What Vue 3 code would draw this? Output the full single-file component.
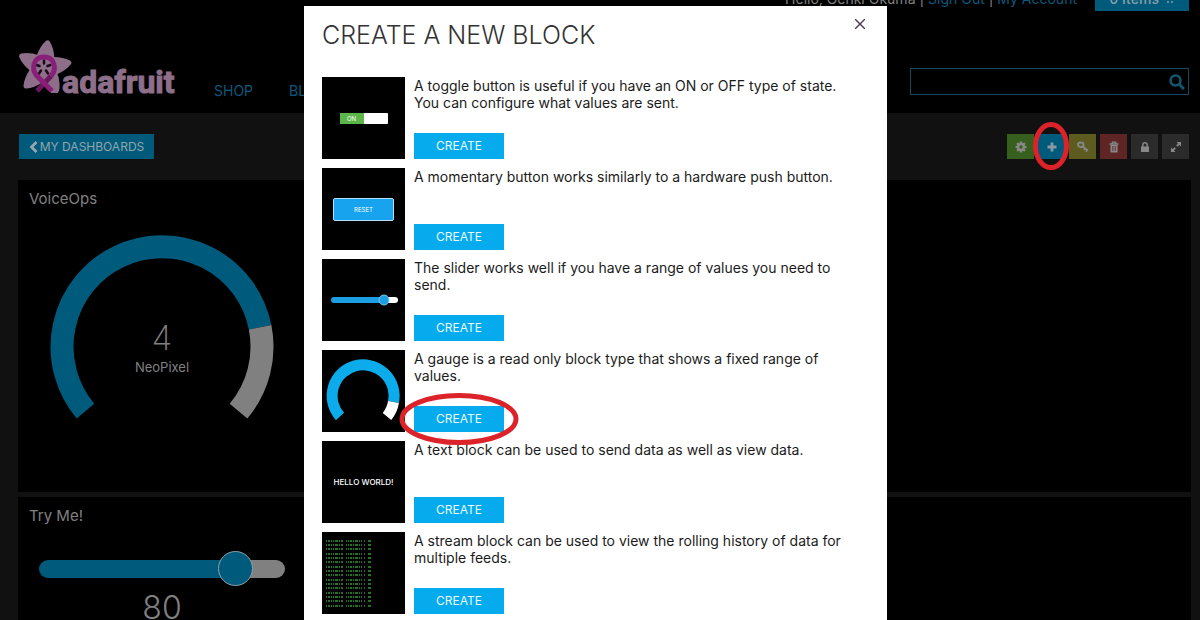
<script setup>
const blocks = [
  { kind: 'toggle', text: 'A toggle button is useful if you have an ON or OFF type of state. You can configure what values are sent.' },
  { kind: 'momentary', text: 'A momentary button works similarly to a hardware push button.' },
  { kind: 'slider', text: 'The slider works well if you have a range of values you need to send.' },
  { kind: 'gauge', text: 'A gauge is a read only block type that shows a fixed range of values.', marked: true },
  { kind: 'text', text: 'A text block can be used to send data as well as view data.' },
  { kind: 'stream', text: 'A stream block can be used to view the rolling history of data for multiple feeds.' },
]
const rows = Array.from({ length: 16 }, (_, i) => 9 + i * 4 + Math.floor(i / 3))
const petals = [8, 78, 150, 225, 298]
</script>

<template>
  <div class="page">
    <header class="top">
      <div class="account">
        <span>Hello, Genki Okuma | <a href="#">Sign Out</a> | <a href="#">My Account</a></span>
        <button class="cart">0 Items
          <svg width="12" height="12" viewBox="0 0 12 12" aria-hidden="true"><path d="M0 1h2l2 6h6l1-4H3" fill="none" stroke="currentColor" /><circle cx="5" cy="10" r="1" fill="currentColor" /><circle cx="9" cy="10" r="1" fill="currentColor" /></svg>
        </button>
      </div>
      <div class="nav-row">
        <a class="logo" href="#" aria-label="adafruit">
          <svg width="156" height="58" viewBox="0 0 156 58">
            <g fill="#8e6f89">
              <path v-for="a in petals" :key="a" :transform="`rotate(${a} 25 28)`" d="M25 30L16 17Q18 7 23 1q2-2 4 0Q32 7 34 17z" />
              <path d="M29 33h5q5 4 5 10v10h-7z" />
            </g>
            <g stroke="#170a16" stroke-width="2.500" stroke-linecap="round">
              <path d="M25 23.500v-3M28.500 26l3-1M27 30.500l2 3M22 30.500l-2 3M20.500 26l-3-1" />
            </g>
            <path d="M18 51L32 36" stroke="#6b175d" stroke-width="5" fill="none" />
            <path d="M32 36C38 29 36 17 25 17S12 29 18 36L33 51" fill="none" stroke="#8a1f79" stroke-width="5" />
            <text x="43" y="53" class="wordmark">adafruit</text>
          </svg>
        </a>
        <nav>
          <a href="#">SHOP</a>
          <a href="#">BLOG</a>
        </nav>
        <form class="search" @submit.prevent>
          <input type="search" aria-label="Search">
          <button aria-label="Search"><svg width="16" height="16" viewBox="0 0 16 16"><circle cx="6.500" cy="6.500" r="5" fill="none" stroke="#12566f" stroke-width="2.500" /><path d="M10 10l5 5" stroke="#12566f" stroke-width="3" /></svg></button>
        </form>
      </div>
    </header>

    <main>
      <div class="toolbar">
        <button class="back"><svg width="9" height="12" viewBox="0 0 9 12"><path d="M7.500 1L2.500 6l5 5" fill="none" stroke="#94a5ab" stroke-width="2.800" /></svg>MY DASHBOARDS</button>
        <div class="tools">
          <button class="tool green" aria-label="Settings"><svg viewBox="0 0 12 12"><circle cx="6" cy="6" r="3" fill="none" stroke="#888" stroke-width="2.400" /><path d="M6 .5v2M6 9.500v2M.5 6h2M9.500 6h2M2.100 2.100l1.400 1.400M8.500 8.500l1.400 1.400M9.900 2.100L8.500 3.500M3.500 8.500l-1.400 1.400" stroke="#888" stroke-width="2.200" /></svg></button>
          <button class="tool blue" aria-label="Add block"><svg viewBox="0 0 12 12"><path d="M6 1.500v9M1.500 6h9" stroke="#8a9aa0" stroke-width="2.800" /></svg>
            <svg class="ring plus-ring" viewBox="0 0 36 48" aria-hidden="true"><ellipse cx="18" cy="24" rx="15.500" ry="21.500" /></svg>
          </button>
          <button class="tool olive" aria-label="Keys"><svg viewBox="0 0 12 12"><path d="M5.500 5.500l5.500 4M8 7.500l-1 1.500M10 9l-1 1.800" stroke="#888" stroke-width="1.600" /><ellipse cx="3.800" cy="3.800" rx="2.800" ry="2.300" fill="none" stroke="#888" stroke-width="1.800" /></svg></button>
          <button class="tool red" aria-label="Delete"><svg viewBox="0 0 12 12"><path d="M1.500 3h9M4.300 3V1.200h3.400V3" fill="none" stroke="#888" stroke-width="1.300" /><path d="M2.500 4h7v7.500h-7z" fill="#888" /><path d="M4.500 5v5M6 5v5M7.500 5v5" stroke="#5f2424" stroke-width=".6" /></svg></button>
          <button class="tool gray" aria-label="Lock"><svg viewBox="0 0 12 12"><path d="M2 5.500h8V11H2z" fill="#888" /><path d="M3.800 6V4a2.200 2.200 0 014.400 0v2" fill="none" stroke="#888" stroke-width="1.500" /></svg></button>
          <button class="tool gray" aria-label="Full screen"><svg viewBox="0 0 12 12"><path d="M6.500 1H11v4.500zM1 6.500V11h4.500z" fill="#888" /><path d="M2.500 9.500l2.700-2.700M6.800 5.200l2.700-2.700" stroke="#888" stroke-width="1.800" /></svg></button>
        </div>
      </div>
      <section class="card gauge-card">
        <h2>VoiceOps</h2>
        <div class="card-body">
          <svg width="224" height="186" viewBox="0 0 224 186" fill="none" stroke-width="23">
            <path d="M35.500 176.100A100 100 0 1 1 210.100 92.200" stroke="#005a7b" />
            <path d="M210.100 92.200A100 100 0 0 1 188.500 176.100" stroke="#808080" />
          </svg>
          <div class="reading"><strong>4</strong><span>NeoPixel</span></div>
        </div>
      </section>
      <section class="card slider-card">
        <h2 id="try">Try Me!</h2>
        <div class="card-body">
          <input class="range" type="range" min="0" max="100" value="85" aria-labelledby="try">
          <output>80</output>
        </div>
      </section>
    </main>

    <div class="overlay">
      <section class="modal" role="dialog" aria-modal="true" aria-labelledby="modal-title">
        <button class="close" aria-label="Close"><svg width="10" height="10" viewBox="0 0 10 10"><path d="M0 0l10 10M10 0L0 10" stroke="#4b3b4b" stroke-width="1.400" /></svg></button>
        <h1 id="modal-title">CREATE A NEW BLOCK</h1>
        <ul>
          <li v-for="b in blocks" :key="b.kind">
            <div class="thumb">
              <div v-if="b.kind === 'toggle'" class="mini-toggle"><span>ON</span></div>
              <div v-else-if="b.kind === 'momentary'" class="mini-reset">RESET</div>
              <svg v-else-if="b.kind === 'slider'" width="83" height="82" viewBox="0 0 83 82"><path d="M64 41h9" stroke="#fff" stroke-width="6" stroke-linecap="round" /><path d="M12 41h47" stroke="#1b9ee2" stroke-width="6" stroke-linecap="round" /><circle cx="62" cy="41" r="5" fill="#1b9ee2" stroke="#7cc9f3" stroke-width="1" /></svg>
              <svg v-else-if="b.kind === 'gauge'" width="83" height="82" viewBox="0 0 83 82" fill="none" stroke-width="11"><path d="M18 66.500A31 31 0 1 1 71.500 52" stroke="#0cabeb" /><path d="M71.500 52A31 31 0 0 1 65 66.500" stroke="#fff" /></svg>
              <span v-else-if="b.kind === 'text'" class="hello">HELLO WORLD!</span>
              <svg v-else width="83" height="82" viewBox="0 0 83 82" fill="none" stroke="#2f8c32" stroke-width="2"><path v-for="y in rows" :key="y" :d="`M4 ${y}H49`" stroke-dasharray="1 1 2 1 1 1 1 1 3 1 1 1 2 3 1 1 1 1 2 1 1 1 3 1 1 1 1 2 1 3 4 20" opacity=".8" /></svg>
            </div>
            <div class="info">
              <p>{{ b.text }}</p>
              <div class="action">
                <button class="create">CREATE</button>
                <svg v-if="b.marked" class="ring create-ring" viewBox="0 0 120 52" aria-hidden="true"><ellipse cx="60" cy="26" rx="57" ry="23.500" /></svg>
              </div>
            </div>
          </li>
        </ul>
      </section>
    </div>
  </div>
</template>

<style>
body { background: #111; }
</style>

<style scoped>
* { box-sizing: border-box; }
.page { position: relative; display: flow-root; height: 100vh; overflow: hidden; background: #111; font-family: Inter, "Liberation Sans", sans-serif; color: #808080; }
button { border: 0; padding: 0; font: inherit; cursor: pointer; }
a { color: #0d587c; text-decoration: none; }
.top { display: flow-root; background: #000; height: 113px; padding: 0 11px 0 19px; }
.account { display: flex; justify-content: flex-end; align-items: center; gap: 18px; height: 26px; margin-top: -15px; font-size: 14px; }
.cart { width: 94px; height: 26px; background: #005a7b; color: #8aa0a8; font-weight: 500; }
.nav-row { display: flex; align-items: flex-start; margin-top: 29px; }
.logo { width: 156px; height: 58px; }
.wordmark { font: 700 32px Roboto, sans-serif; fill: #8e6f89; stroke: #8e6f89; stroke-width: 1; }
nav { display: flex; gap: 36px; margin: 42px 0 0 39px; font-size: 14px; line-height: 17px; }
.search { position: relative; width: 279px; height: 27px; margin: 28px 0 0 auto; }
.search input { width: 100%; height: 100%; border: 1px solid #164a5e; background: #000; color: #808080; padding: 0 30px 0 8px; }
.search button { position: absolute; right: 4px; top: 6px; width: 16px; height: 16px; background: none; }
.search button svg { display: block; }
main { padding: 21px 9px 0 18px; }
.toolbar { display: flex; justify-content: space-between; padding: 0 2px 0 1px; }
.back { display: flex; align-items: center; justify-content: center; gap: 2px; width: 135px; height: 25px; background: #005a7b; color: #94a5ab; font-size: 12px; }
.tools { display: flex; gap: 4px; }
.tool { position: relative; display: grid; place-items: center; width: 27px; height: 25px; }
.tool > svg:first-child { width: 12px; height: 12px; }
.green { background: #37601f; }
.blue { background: #005a7b; }
.olive { background: #5d5b1f; }
.red { background: #5f2424; }
.gray { background: #2b2b2b; }
.ring { position: absolute; fill: none; stroke: #db2329; stroke-width: 5; z-index: 2; pointer-events: none; }
.plus-ring { left: -5px; top: -12px; width: 36px; height: 48px; }
.card { background: #000; }
.card h2 { margin: 0; padding: 10px 11px 0; font-size: 15px; line-height: 18px; font-weight: 400; }
.card-body { width: 288px; position: relative; display: flex; flex-direction: column; align-items: center; }
.gauge-card { margin-top: 21px; height: 312px; }
.gauge-card svg { margin-top: 27px; }
.reading { position: absolute; top: 109px; display: flex; flex-direction: column; align-items: center; }
.reading strong { font-size: 34px; line-height: 42px; font-weight: 200; }
.reading span { font-size: 13px; line-height: 16px; }
.slider-card { margin-top: 5px; height: 124px; }
.range { appearance: none; width: 246px; height: 36px; margin: 26px 0 0; background: none; }
.range::-webkit-slider-runnable-track { height: 18px; border-radius: 9px; background: linear-gradient(to right, #005a7b 80%, #808080 80%); }
.range::-webkit-slider-thumb { appearance: none; width: 35px; height: 35px; margin-top: -9px; border: 1px solid #8ba1aa; border-radius: 50%; background: #005a7b; }
output { font-size: 32px; line-height: 42px; font-weight: 300; }
.overlay { position: absolute; inset: 0; display: flex; justify-content: center; padding: 6px 9px 0 0; }
.modal { position: relative; width: 583px; height: max-content; padding: 15px 18px 24px; background: #fff; color: #1b1b1b; }
.close { position: absolute; right: 19px; top: 10px; width: 16px; height: 16px; display: grid; place-items: center; background: none; }
h1 { margin: 0 0 27px; font-size: 25px; line-height: 29px; font-weight: 300; color: #333; }
ul { list-style: none; margin: 0; padding: 0; display: grid; gap: 9px; }
li { display: flex; gap: 9px; }
.thumb { flex: none; display: grid; place-items: center; width: 83px; height: 82px; background: #000; color: #fff; }
.thumb svg { display: block; }
.info { flex: 1; display: flex; flex-direction: column; justify-content: space-between; max-width: 440px; }
p { margin: 0; font-size: 14px; line-height: 17px; }
.action { position: relative; display: flex; }
.create { width: 90px; height: 26px; padding-bottom: 1px; background: #05abec; color: #e9f8fe; font-size: 12px; }
.create-ring { left: -15px; top: -13px; width: 120px; height: 52px; }
.mini-toggle { width: 48px; height: 11px; background: #fff; border-radius: 1px; }
.mini-toggle span { display: block; width: 24px; background: #5cb548; font-size: 6px; line-height: 11px; text-align: center; }
.mini-reset { width: 61px; height: 23px; border: 1px solid #b5e0fa; border-radius: 2px; background: #17a3ee; font-size: 6px; line-height: 21px; text-align: center; }
.hello { font-size: 8px; font-weight: 500; }
</style>
